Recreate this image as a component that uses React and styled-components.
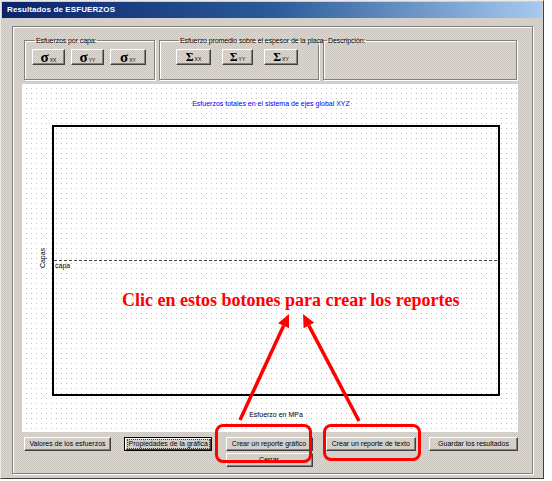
import React from "react";
import styled, { createGlobalStyle } from "styled-components";

const GlobalStyle = createGlobalStyle`
  html, body {
    margin: 0;
    padding: 0;
    background: #ffffff;
  }
  body {
    font-family: "Liberation Sans", Arial, sans-serif;
  }
`;

const Window = styled.div`
  position: relative;
  box-sizing: border-box;
  width: 544px;
  height: 479px;
  padding: 1px;
  display: flex;
  flex-direction: column;

  background-color: #d4d0c8;
  background-image: repeating-conic-gradient(#dcd6d0 0% 25%, #ccc8c1 0% 50%);
  background-size: 2px 2px;

  border: 1px solid;
  border-color: #ece9e4 #404040 #404040 #ece9e4;
`;

const TitleBar = styled.div`
  height: 16px;
  padding-left: 5px;
  background: linear-gradient(to right, #0a246a 0%, #2a5a9a 50%, #a6caf0 100%);
  color: #ffffff;
  font-weight: bold;
  font-size: 8px;
  line-height: 16px;
  letter-spacing: 0.1px;
`;

const Body = styled.div`
  flex: 1;
  display: flex;
  padding: 8px 9px 3px 10px;
`;

const Frame = styled.div`
  flex: 1;
  box-sizing: border-box;
  padding: 9px 0 0 9px;
  border: 1px solid #808080;
  box-shadow: inset 1px 1px 0 #ffffff, 1px 1px 0 #ffffff;
`;

const GroupRow = styled.div`
  display: flex;
  gap: 4px;
  margin-left: 2px;
`;

const Group = styled.fieldset`
  box-sizing: border-box;
  margin: 0;
  min-width: 0;
  padding: 0 0 0 ${({ $pad }) => $pad || 0}px;
  width: ${({ $w }) => $w}px;
  height: 44px;
  border: 1px solid #808080;
  box-shadow: inset 1px 1px 0 #ffffff, 1px 1px 0 #ffffff;
`;

const Legend = styled.legend`
  margin-left: 3px;
  padding: 0 1px;
  font-size: 7px;
  line-height: 9px;
  letter-spacing: -0.1px;
  white-space: nowrap;
  color: #000000;
`;

const SymbolRow = styled.div`
  display: flex;
  gap: ${({ $gap }) => $gap}px;
  margin-top: 4px;
`;

const raised = `
  box-sizing: border-box;
  background: transparent;
  border: 1px solid;
  border-color: #ffffff #404040 #404040 #ffffff;
  box-shadow: inset -1px -1px 0 #808080;
  padding: 0;
  margin: 0;
  color: #000000;
  cursor: default;
`;

const SymbolButton = styled.button`
  ${raised}
  width: ${({ $w }) => $w || 34}px;
  height: 16px;
  display: flex;
  align-items: baseline;
  justify-content: center;
  font-family: "Liberation Serif", "Times New Roman", serif;
  font-weight: bold;
  line-height: 14px;
`;

const Sym = styled.span`
  font-size: ${({ $big }) => ($big ? 15 : 12)}px;
`;

const Sub = styled.span`
  font-family: "Liberation Sans", Arial, sans-serif;
  font-weight: normal;
  font-size: 5px;
  margin-left: 1px;
`;

const PlotArea = styled.div`
  width: 496px;
  height: 348px;
  margin-top: 4px;
  background-color: #ffffff;
  background-image:
    linear-gradient(to right, #ffffff 0 4px, transparent 4px 5px),
    linear-gradient(to bottom, #ffffff 0 4px, #c2c2c2 4px 5px);
  background-size: 5px 5px;

  svg {
    display: block;
    font-family: "Liberation Sans", Arial, sans-serif;
  }
`;

const ButtonGrid = styled.div`
  width: 494px;
  margin: 5px 0 0 2px;
  display: grid;
  grid-template-columns: 87px 88px 87px 90px 89px;
  grid-template-rows: 14px 15px;
  row-gap: 2px;
  justify-content: space-between;
`;

const DialogButton = styled.button`
  ${raised}
  height: 14px;
  display: flex;
  align-items: center;
  justify-content: center;
  font-family: "Liberation Sans", Arial, sans-serif;
  font-size: 7px;
  line-height: 12px;
  white-space: nowrap;
  grid-column: ${({ $col }) => $col || "auto"};
  grid-row: ${({ $row }) => $row || "auto"};
  ${({ $focused }) =>
    $focused &&
    `
    border-color: #000000;
    box-shadow: inset 1px 1px 0 #ffffff, inset -1px -1px 0 #404040;
  `}
`;

const FocusRing = styled.span`
  padding: 0 1px;
  line-height: 8px;
  outline: 1px dotted #444444;
`;

const Note = styled.div`
  position: absolute;
  left: 121px;
  top: 290px;
  font-family: "Liberation Serif", "Times New Roman", serif;
  font-weight: bold;
  font-size: 18px;
  line-height: 18px;
  color: #ff0000;
  white-space: nowrap;
`;

const Highlight = styled.div`
  position: absolute;
  box-sizing: border-box;
  left: ${({ $x }) => $x}px;
  top: ${({ $y }) => $y}px;
  width: ${({ $w }) => $w}px;
  height: ${({ $h }) => $h}px;
  border: 3px solid #ff0000;
  border-radius: 8px;
  pointer-events: none;
`;

const ArrowLayer = styled.svg`
  position: absolute;
  left: 0;
  top: 0;
  pointer-events: none;
`;

const Chart = () => (
  <svg width="496" height="348" viewBox="0 0 496 348">
    <text x="249" y="22" textAnchor="middle" fontSize="7" fill="#0000ff">
      Esfuerzos totales en el sistema de ejes global XYZ
    </text>
    <rect x="31" y="42" width="446" height="269" fill="none" stroke="#000000" strokeWidth="2" />
    <line x1="32" y1="176.5" x2="476" y2="176.5" stroke="#444444" strokeWidth="1" strokeDasharray="3 2" />
    <text x="33" y="184" fontSize="7" fill="#000000">capa</text>
    <text x="0" y="0" fontSize="7" fill="#000000" textAnchor="middle" transform="translate(23 174) rotate(-90)">
      Capas
    </text>
    <text x="254" y="333" textAnchor="middle" fontSize="7" fill="#000000">
      Esfuerzo en MPa
    </text>
  </svg>
);

const App = () => {
  return (
    <>
      <GlobalStyle />
      <Window>
        <TitleBar>Resultados de ESFUERZOS</TitleBar>
        <Body>
          <Frame>
            <GroupRow>
              <Group $w={131} $pad={7}>
                <Legend>Esfuerzos por capa:</Legend>
                <SymbolRow $gap={6}>
                  <SymbolButton $w={33}><Sym $big>σ</Sym><Sub>XX</Sub></SymbolButton>
                  <SymbolButton $w={33}><Sym $big>σ</Sym><Sub>YY</Sub></SymbolButton>
                  <SymbolButton $w={36}><Sym $big>σ</Sym><Sub>XY</Sub></SymbolButton>
                </SymbolRow>
              </Group>
              <Group $w={160} $pad={16}>
                <Legend>Esfuerzo promedio sobre el espesor de la placa</Legend>
                <SymbolRow $gap={11}>
                  <SymbolButton $w={35}><Sym>Σ</Sym><Sub>XX</Sub></SymbolButton>
                  <SymbolButton $w={31}><Sym>Σ</Sym><Sub>YY</Sub></SymbolButton>
                  <SymbolButton $w={34}><Sym>Σ</Sym><Sub>XY</Sub></SymbolButton>
                </SymbolRow>
              </Group>
              <Group $w={194}>
                <Legend>Descripción:</Legend>
              </Group>
            </GroupRow>

            <PlotArea>
              <Chart />
            </PlotArea>

            <ButtonGrid>
              <DialogButton>Valores de los esfuerzos</DialogButton>
              <DialogButton $focused>
                <FocusRing>Propiedades de la gráfica</FocusRing>
              </DialogButton>
              <DialogButton>Crear un reporte gráfico</DialogButton>
              <DialogButton>Crear un reporte de texto</DialogButton>
              <DialogButton>Guardar los resultados</DialogButton>
              <DialogButton $col="3" $row="2">Cerrar</DialogButton>
            </ButtonGrid>
          </Frame>
        </Body>

        <Note>Clic en estos botones para crear los reportes</Note>

        <ArrowLayer width="552" height="481" viewBox="0 0 552 481">
          <line x1="239" y1="419" x2="282.6" y2="324.8" stroke="#ff0000" strokeWidth="3.5" />
          <polygon points="288,313 288.1,327.3 277.1,322.3" fill="#ff0000" />
          <line x1="358" y1="420" x2="307.9" y2="324.6" stroke="#ff0000" strokeWidth="3.5" />
          <polygon points="302,313 313.2,321.8 302.6,327.3" fill="#ff0000" />
        </ArrowLayer>

        <Highlight $x={214} $y={423} $w={97} $h={39} />
        <Highlight $x={322} $y={423} $w={98} $h={37} />
      </Window>
    </>
  );
};

export default App;
